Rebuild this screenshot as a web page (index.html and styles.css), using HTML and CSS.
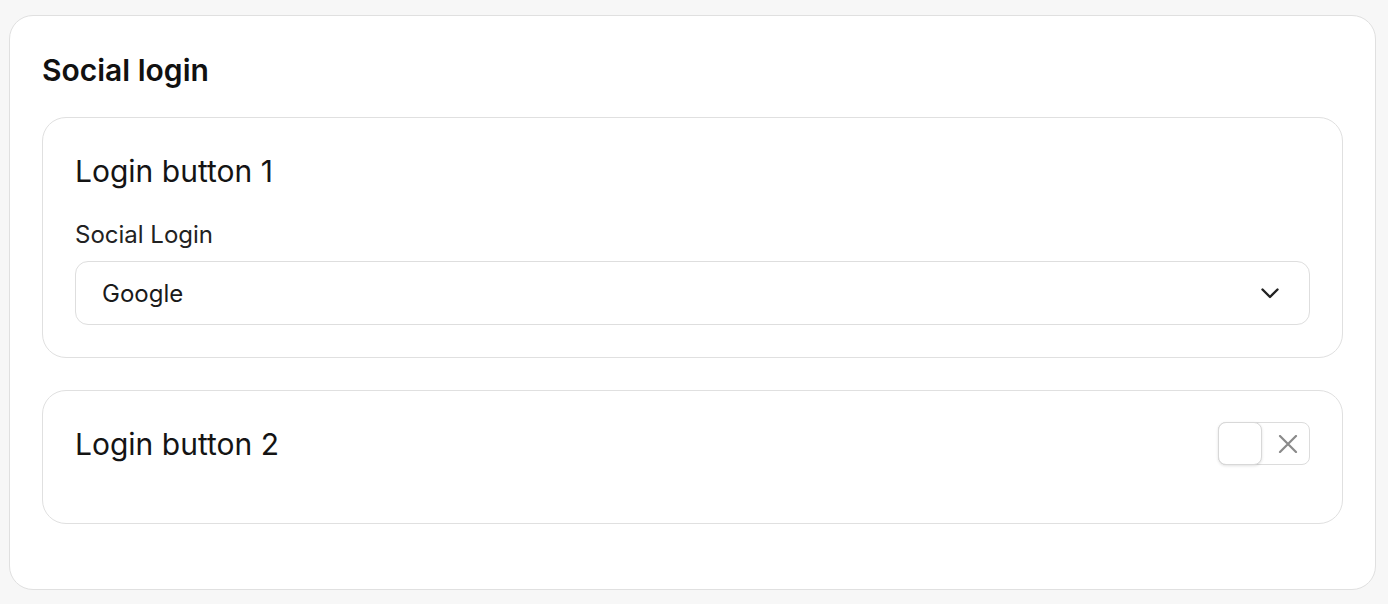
FILE: index.html
```html
<!DOCTYPE html>
<html lang="en">
<head>
<meta charset="utf-8">
<title>Social login</title>
<link rel="stylesheet" href="styles.css">
</head>
<body>
<section class="panel">
  <h2 class="panel-title">Social login</h2>
  <div class="cards">
    <div class="card">
      <div class="card-head">
        <h3 class="card-title">Login button 1</h3>
      </div>
      <label class="field-label">Social Login</label>
      <div class="select">
        <span class="select-value">Google</span>
        <svg class="chevron" width="18" height="11" viewBox="0 0 18 11" fill="none"><path d="M1.5 1.5 L9 9 L16.5 1.5" stroke="#222" stroke-width="2.4" stroke-linecap="round" stroke-linejoin="round"/></svg>
      </div>
    </div>
    <div class="card card-off">
      <div class="card-head">
        <h3 class="card-title">Login button 2</h3>
        <div class="toggle">
          <span class="knob"></span>
          <svg class="x-icon" width="20" height="18" viewBox="0 0 20 18" fill="none"><path d="M2 1 L18 17 M18 1 L2 17" stroke="#8a8a8a" stroke-width="2.2" stroke-linecap="round"/></svg>
        </div>
      </div>
    </div>
  </div>
</section>
</body>
</html>
```
FILE: styles.css
```css
* { box-sizing: border-box; }
html, body { margin: 0; padding: 0; }
body {
  background: #f7f7f7;
  font-family: Inter, "Noto Sans", sans-serif;
  color: #141414;
  padding: 15px 12px 14px 9px;
}
.panel {
  background: #fff;
  border: 1px solid #e0e0e0;
  border-radius: 24px;
  padding: 32px 32px 63px;
  height: 575px;
}
.panel-title {
  margin: 0 0 25px;
  font-size: 30px;
  line-height: 44px;
  font-weight: 600;
  color: #111;
}
.cards {
  display: flex;
  flex-direction: column;
  gap: 32px;
}
.card {
  border: 1px solid #e0e0e0;
  border-radius: 24px;
  padding: 32px;
}
.card-head {
  display: flex;
  align-items: center;
  justify-content: space-between;
  height: 43px;
  margin-bottom: 26px;
}
.card-off .card-head { margin-bottom: 25px; }
.card-title {
  margin: 0;
  font-size: 30px;
  font-weight: 400;
  line-height: 43px;
  color: #141414;
}
.field-label {
  display: block;
  font-size: 24px;
  line-height: 32px;
  margin-top: 2px;
  margin-bottom: 10px;
  color: #222;
}
.select {
  height: 64px;
  border: 1px solid #dedede;
  border-radius: 13px;
  display: flex;
  align-items: center;
  justify-content: space-between;
  padding: 0 30px 0 26px;
}
.select-value {
  font-size: 24px;
  color: #1a1a1a;
}
.chevron { display: block; }
.toggle {
  width: 92px;
  height: 43px;
  margin-top: -2px;
  border: 1px solid #dcdcdc;
  border-radius: 8px;
  display: flex;
  align-items: center;
  justify-content: space-between;
  padding-right: 11px;
  background: #fff;
}
.knob {
  width: 44px;
  height: 43px;
  margin: -1px 0 -1px -1px;
  border: 1px solid #d8d8d8;
  border-radius: 8px;
  background: #fff;
  box-shadow: 0 1px 3px rgba(0,0,0,0.12);
}
.x-icon { display: block; }
```
